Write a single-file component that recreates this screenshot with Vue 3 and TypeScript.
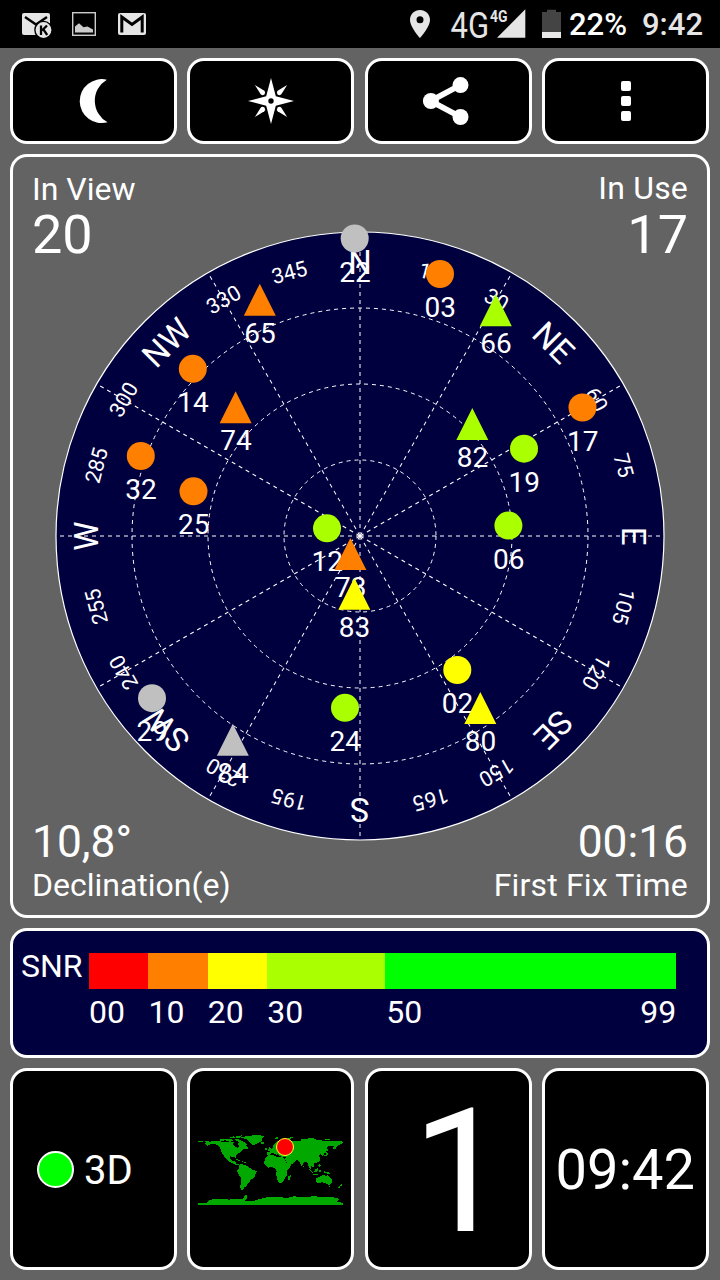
<script setup lang="ts">
type Shape = 'circle' | 'triangle'

interface Satellite {
  id: string
  shape: Shape
  x: number
  y: number
  color: string
}

interface DialLabel {
  text: string
  angle: number
  major: boolean
}

const ORANGE = '#ff8000'
const LIME = '#aaff00'
const YELLOW = '#ffff00'
const GRAY = '#c0c0c0'

const rings: number[] = [76, 152, 228]
const rays: number[] = Array.from({ length: 12 }, (_, i) => i * 30)

const names: Record<number, string> = { 0: 'N', 45: 'NE', 90: 'E', 135: 'SE', 180: 'S', 225: 'SW', 270: 'W', 315: 'NW' }
const dialLabels: DialLabel[] = Array.from({ length: 24 }, (_, i) => {
  const angle = i * 15
  return { text: names[angle] ?? String(angle), angle, major: angle in names }
})

// Coordinates are relative to the centre of the dial.
const satellites: Satellite[] = [
  { id: '02', shape: 'circle', x: 97.3, y: 134, color: YELLOW },
  { id: '03', shape: 'circle', x: 80, y: -262, color: ORANGE },
  { id: '06', shape: 'circle', x: 148.4, y: -10.4, color: LIME },
  { id: '12', shape: 'circle', x: -33, y: -7.7, color: LIME },
  { id: '14', shape: 'circle', x: -167.2, y: -167.2, color: ORANGE },
  { id: '17', shape: 'circle', x: 222.5, y: -128.5, color: ORANGE },
  { id: '19', shape: 'circle', x: 164, y: -87.3, color: LIME },
  { id: '22', shape: 'circle', x: -5.3, y: -297.5, color: GRAY },
  { id: '24', shape: 'circle', x: -15, y: 171.8, color: LIME },
  { id: '25', shape: 'circle', x: -166.5, y: -44.7, color: ORANGE },
  { id: '29', shape: 'circle', x: -208, y: 162.2, color: GRAY },
  { id: '32', shape: 'circle', x: -219.2, y: -80, color: ORANGE },
  { id: '65', shape: 'triangle', x: -100.2, y: -236.3, color: ORANGE },
  { id: '66', shape: 'triangle', x: 135.8, y: -225.8, color: LIME },
  { id: '73', shape: 'triangle', x: -9.6, y: 18, color: ORANGE },
  { id: '74', shape: 'triangle', x: -124.4, y: -128.7, color: ORANGE },
  { id: '80', shape: 'triangle', x: 120.3, y: 172, color: YELLOW },
  { id: '82', shape: 'triangle', x: 112.3, y: -112, color: LIME },
  { id: '83', shape: 'triangle', x: -5.7, y: 57.7, color: YELLOW },
  { id: '84', shape: 'triangle', x: -127.2, y: 203.7, color: GRAY },
]
</script>

<template>
  <div class="screen">
    <header class="status">
      <svg class="notes" width="160" height="48" viewBox="0 0 160 48">
        <rect x="22" y="13" width="28" height="22" rx="2" fill="#e5e5e5" />
        <path d="M25 17l11 7.5L47 17" fill="none" stroke="#000" stroke-width="2.4" />
        <circle cx="43.5" cy="30" r="8.6" fill="#e5e5e5" stroke="#000" stroke-width="1.4" />
        <path d="M41 25.5v9.5M47 25.5l-5 5M43.2 29.2l4 5.8" fill="none" stroke="#000" stroke-width="2.3" />
        <rect x="72.7" y="12.7" width="22.6" height="22.6" fill="none" stroke="#ccc" stroke-width="1.4" />
        <path d="M75 32.5v-6l4-3.3 4.5 4 4-.8 5.5 3v3.100z" fill="#ccc" />
        <rect x="118" y="13" width="28" height="22" rx="2" fill="#e5e5e5" />
        <path d="M121.800 32.500v-15.500l10.200 7.500 10.200-7.500v15.500" fill="none" stroke="#000" stroke-width="3" />
      </svg>
      <svg class="signals" width="160" height="48" viewBox="404 0 160 48">
        <path fill-rule="evenodd" fill="#e5e5e5" d="M420 10c-5.600 0-10 4.300-10 9.700C410 27 420 38 420 38s10-11 10-18.300c0-5.400-4.400-9.700-10-9.700zm0 6.200a3.500 3.500 0 1 1 0 7 3.500 3.500 0 0 1 0-7z" />
        <text class="net" x="450.500" y="37.500" textLength="38.500" lengthAdjust="spacingAndGlyphs">4G</text>
        <text class="net-small" x="490" y="22" textLength="17.500" lengthAdjust="spacingAndGlyphs">4G</text>
        <path d="M525.300 9.300v28.400H497z" fill="#e5e5e5" />
        <path d="M542 12h5v-2.300h9V12h5v20h-19z" fill="#444" />
        <rect x="542" y="32" width="19" height="6" fill="#e8e8e8" />
      </svg>
      <span class="battery">22%</span>
      <span class="clock">9:42</span>
    </header>

    <main class="content">
      <nav class="row buttons">
        <button class="tile" aria-label="Night mode">
          <svg width="64" height="64" viewBox="-32 -32 64 64">
            <path d="M12.800 -21.300A22 22 0 1 0 13.600 21.300A24.500 24.500 0 0 1 12.800 -21.300z" fill="#fff" />
          </svg>
        </button>
        <button class="tile" aria-label="Compass">
          <svg width="64" height="64" viewBox="-32 -32 64 64">
            <path d="M0-23L4.800-4.800 23 0 4.800 4.800 0 23-4.800 4.800-23 0-4.800-4.800z" fill="#fff" />
            <circle r="2.700" fill="#000" />
            <g v-for="a in [0, 90, 180, 270]" :key="a" :transform="`rotate(${a + 45})`">
              <path d="M0-22.800L2.600-12Q2.800-10 0-9.200-2.800-10-2.600-12z" fill="#fff" />
            </g>
          </svg>
        </button>
        <button class="tile" aria-label="Share">
          <svg width="64" height="64" viewBox="-32.600 -32 64 64">
            <path d="M12-16L-18 0 12 16" fill="none" stroke="#fff" stroke-width="5.800" />
            <g fill="#fff"><circle cx="11.900" cy="-15.900" r="8" /><circle cx="-17.700" cy="0" r="8" /><circle cx="11.900" cy="16" r="8" /></g>
          </svg>
        </button>
        <button class="tile" aria-label="More">
          <svg width="64" height="64" viewBox="-32 -32 64 64">
            <g fill="#fff"><rect x="-5" y="-20" width="10" height="10" rx="2" /><rect x="-5" y="-5" width="10" height="10" rx="2" /><rect x="-5" y="10" width="10" height="10" rx="2" /></g>
          </svg>
        </button>
      </nav>

      <section class="panel sky">
        <svg class="dial" width="694" height="758" viewBox="-347 -379 694 758">
          <circle r="304" fill="#00003f" stroke="#fff" stroke-width="1.200" />
          <g class="grid-lines">
            <circle v-for="r in rings" :key="r" :r="r" />
            <line v-for="a in rays" :key="a" x1="0" y1="0" x2="0" :y2="a % 90 === 0 ? -304 : -301" :transform="`rotate(${a})`" />
          </g>
          <text
            v-for="l in dialLabels"
            :key="l.angle"
            :class="l.major ? 'major' : 'minor'"
            x="0"
            :y="l.major ? -262 : -265.500"
            :transform="`rotate(${l.angle})`"
          >{{ l.text }}</text>
          <g v-for="s in satellites" :key="s.id" :transform="`translate(${s.x} ${s.y})`">
            <circle v-if="s.shape === 'circle'" r="14" :fill="s.color" />
            <path v-else d="M0-16L16 16H-16z" :fill="s.color" />
            <text class="sat" x="0.300" y="43.100">{{ s.id }}</text>
          </g>
        </svg>
        <div class="corners">
          <div class="corner"><span class="label">In View</span><span class="count">20</span></div>
          <div class="corner end"><span class="label raised">In Use</span><span class="count">17</span></div>
          <div class="corner low"><span class="value">10,8°</span><span class="label">Declination(e)</span></div>
          <div class="corner low end"><span class="value">00:16</span><span class="label">First Fix Time</span></div>
        </div>
      </section>

      <section class="panel snr">
        <span class="snr-title">SNR</span>
        <div class="scale">
          <div class="seg"><i class="c0"></i><span>00</span></div>
          <div class="seg"><i class="c1"></i><span>10</span></div>
          <div class="seg"><i class="c2"></i><span>20</span></div>
          <div class="seg"><i class="c3"></i><span>30</span></div>
          <div class="seg last"><i class="c4"></i><div class="ends"><span>50</span><span>99</span></div></div>
        </div>
      </section>

      <section class="row widgets">
        <div class="tile fix"><i class="led"></i><span>3D</span></div>
        <div class="tile map">
          <svg width="160" height="100" viewBox="0 0 480 300">
            <g fill="#00a800" shape-rendering="crispEdges">
              <path d="M24 63h14v4H24zM42 62L60 65 76 62 90 64 104 67 120 64 132 67 128 73 134 79 142 84 147 78 142 71 150 66 160 69 168 77 175 83 172 88 161 87 153 95 144 101 139 107 138 116 132 111 120 109 122 118 128 124 136 123 138 130 147 134 136 134 126 129 112 121 100 105 93 94 90 81 82 75 70 71 60 73 46 80 52 75 44 71 50 67z" />
              <path d="M88 59l14-2 4 4-14 2zM106 57l16-1 10 5-12 3-14-3zM118 52l14-3 4 4-14 2zM136 57l14 2 14 8 8 8-8 0-12-7-16-7zM138 49l18-3-4 6-12 2z" />
              <path d="M152 53L170 48 200 45 224 48 216 55 215 64 202 69 192 76 185 74 179 65 170 58z" />
              <path d="M212 68l9-2 4 3-6 3-7-1zM234 91l4-10 4 2 3 8-6 3zM226 85l6-1 0 6-6 1zM250 53l14-1 4 3-10 2zM292 59l4-6 16-2-8 4-7 6zM352 54l12-1 8 3-14 2zM404 57l16 0 2 3-14 0z" />
              <path d="M136 116l12 4 8 4-10-1-9-4zM156 124l8 1 3 3-10-1z" />
              <path d="M145 137L153 132 162 134 173 139 181 145 190 150 201 154 196 164 192 174 182 180 178 188 171 194 169 200 162 203 158 210 162 213 152 209 151 198 154 184 152 173 145 162 141 151 147 145z" />
              <path d="M228 112L236 106 250 105 258 110 270 110 281 113 287 125 294 134 304 134 298 145 290 154 291 166 285 172 282 180 275 189 267 189 262 178 258 164 260 154 255 145 246 141 236 143 226 136 221 128z" />
              <path d="M294 170L302 164 302 170 298 180 293 178z" />
              <path d="M231 104L232 96 241 95 238 90 246 87 251 82 249 76 258 66 270 60 286 57 300 62 318 63 332 62 334 58 350 57 365 54 378 59 400 62 420 63 440 62 459 65 459 69 447 75 442 78 436 88 430 86 431 78 419 77 410 81 413 88 407 98 402 98 400 108 395 106 391 101 387 107 392 117 386 126 376 129 371 131 374 139 367 142 363 136 364 146 360 147 355 136 351 127 344 125 338 134 334 138 329 127 322 121 311 118 318 122 307 132 295 136 286 119 287 110 275 110 267 107 262 101 260 106 250 98 243 100 239 105z" />
              <path d="M409 97l6 2-3 7-11 4 0-3 8-3zM412 86l3 7-4 1zM386 132l6 3-2 8-5-4zM358 146l13 13-3 2-11-12zM374 150l9-6 2 5-7 8-5-2zM387 149l8 1-5 8-3-3zM370 161l13 2 4 2-17-1zM401 154l13 2 8 7-9-2-11-4zM338 137l4 3-3 2z" />
              <path d="M379 174L390 170 397 165 404 164 409 170 413 163 419 172 426 179 425 188 418 195 411 193 405 188 394 187 383 190 379 184zM415 197l6 0-3 4zM454 190l3 5-4 4-2-3zM448 199l4 1-5 5-4-1z" />
              <path d="M24 249L52 248 60 239 90 236 118 239 136 236 158 238 165 227 172 224 170 235 166 242 190 243 204 238 222 234 232 231 276 232 290 235 310 229 350 232 370 228 394 231 430 232 448 237 440 246 459 248 459 255H24z" />
            </g>
            <circle cx="285" cy="81" r="25.500" fill="#f00" stroke="#ff3" stroke-width="3" />
          </svg>
        </div>
        <div class="tile big">1</div>
        <div class="tile time">09:42</div>
      </section>
    </main>
  </div>
</template>

<style>
body { margin: 0; background: #636363; }
</style>

<style scoped>
.screen { width: 720px; height: 1280px; overflow: hidden; background: #636363; color: #fff; font-family: Roboto, "Liberation Sans", sans-serif; }
.status { height: 48px; background: #000; display: flex; align-items: center; box-sizing: border-box; }
.status svg { display: block; }
.signals { margin-left: 244px; }
.net { font-size: 37px; fill: #e5e5e5; }
.net-small { font-size: 16.500px; font-weight: 700; fill: #e5e5e5; }
.battery { width: 72px; margin-left: 5px; font-size: 31px; line-height: 48px; font-weight: 500; padding-top: 2px; box-sizing: border-box; }
.clock { font-size: 31px; line-height: 48px; font-weight: 500; color: #e5e5e5; padding-top: 2px; margin-left: 1px; }

.content { display: flex; flex-direction: column; gap: 10px; padding: 10px; }
.row { display: grid; grid-template-columns: repeat(4, 167px); gap: 10.400px; }
.tile { box-sizing: border-box; border: 3px solid #fff; border-radius: 17px; background: #000; color: #fff; display: flex; align-items: center; justify-content: center; padding: 0; margin: 0; font-family: inherit; min-width: 0; }
.tile svg { display: block; flex: none; }
.buttons { height: 86px; }
.panel { box-sizing: border-box; border: 3px solid #fff; border-radius: 17px; }

.sky { height: 764px; display: grid; }
.dial, .corners { grid-area: 1 / 1; }
.dial { display: block; }
.grid-lines { fill: none; stroke: #fff; stroke-width: 1; stroke-dasharray: 4 4; }
.dial text { fill: #fff; text-anchor: middle; }
.major { font-size: 33px; }
.minor { font-size: 21.300px; }
.sat { font-size: 28px; }
.corners { display: grid; grid-template-columns: 1fr 1fr; grid-template-rows: 1fr 1fr; padding: 13px 19px 11px; z-index: 1; }
.corner { display: flex; flex-direction: column; white-space: nowrap; }
.end { text-align: right; }
.end .label { letter-spacing: 0.180px; }
.low { justify-content: flex-end; }
.label { font-size: 32px; line-height: 38px; }
.raised { line-height: 36px; padding-bottom: 2px; }
.count { font-size: 54px; line-height: 54px; }
.value { font-size: 44.300px; line-height: 48px; }

.snr { height: 130px; background: #00003f; display: flex; padding: 22px 0 0 8px; }
.snr-title { width: 68px; font-size: 32px; line-height: 26px; }
.scale { display: flex; width: 587.300px; font-size: 32px; }
.seg { display: flex; flex-direction: column; width: 59.400px; }
.seg:nth-child(4) { width: 118px; }
.seg.last { flex: 1; }
.seg i { display: block; height: 36px; }
.seg span { line-height: 46px; }
.ends { display: flex; justify-content: space-between; padding-left: 1px; }
.c0 { background: #f00; }
.c1 { background: #ff8000; }
.c2 { background: #ff0; }
.c3 { background: #af0; }
.c4 { background: #0f0; }

.widgets { height: 202px; }
.fix { justify-content: flex-start; padding-left: 23.500px; gap: 10.500px; font-size: 40px; }
.fix span { padding-top: 2px; }
.led { box-sizing: border-box; width: 37px; height: 37px; border-radius: 50%; border: 2px solid #fff; background: #0f0; }
.map { padding: 2px 2px 0 0; }
.big { font-size: 172px; line-height: 190px; padding: 6px 0 0 24px; }
.time { font-size: 56px; padding: 2px 1px 0 0; }
</style>
